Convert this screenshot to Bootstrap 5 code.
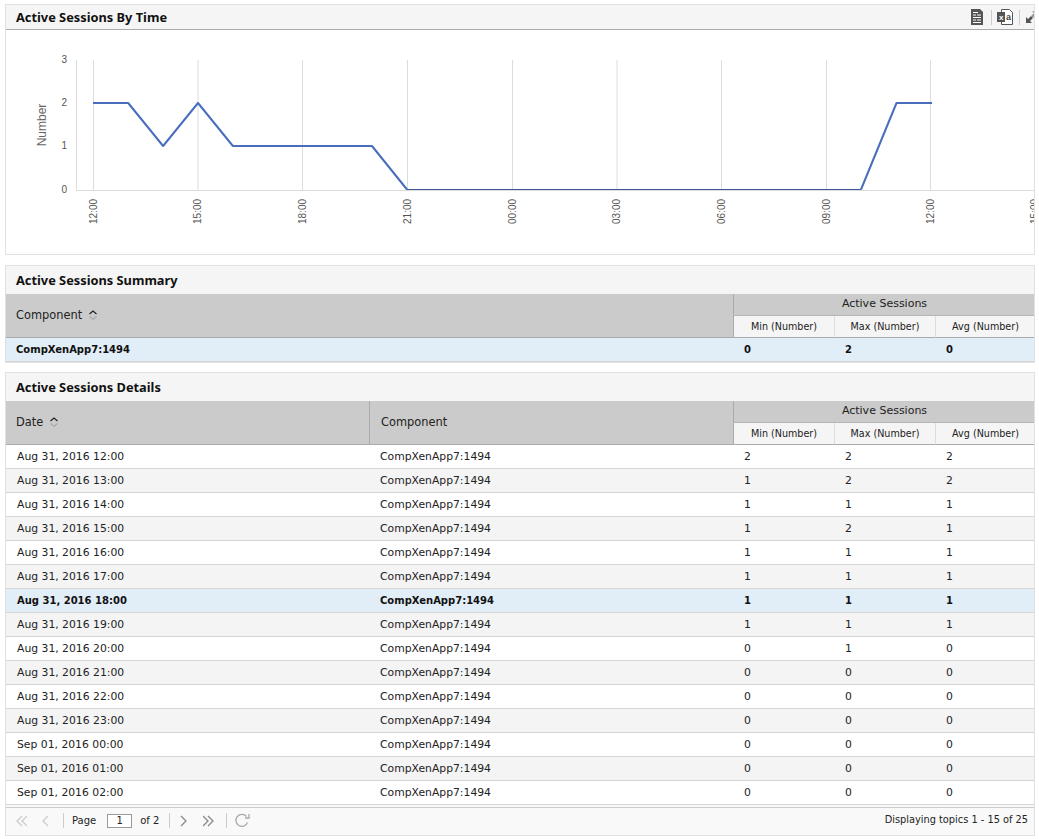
<!DOCTYPE html>
<html lang="en"><head><meta charset="utf-8"><title>Active Sessions</title>
<link href="https://cdn.jsdelivr.net/npm/bootstrap@5.3.0/dist/css/bootstrap.min.css" rel="stylesheet">
<style>
body{background:#fff;font-family:"DejaVu Sans",sans-serif;font-size:11px;color:#111;padding:4px 4px 0 5px;margin:0;overflow:hidden}
.pane{border:1px solid #e1e1e1;margin-bottom:10px;overflow:hidden;background:#fff}
.pane.tight{margin-bottom:9px}
.pane.foot{background:#f9f9f9}
.pane-head{height:24px;background:#f5f5f5;font-family:"Noto Sans","DejaVu Sans",sans-serif;font-weight:700;font-size:12.8px;color:#111;padding:2px 0 0 10px;display:flex;align-items:center;justify-content:space-between;white-space:nowrap}
.pane-head.ruled{border-bottom:1px solid #aaa;height:25px;padding-right:0}
.pane-head.plain{height:28px}
.tools{display:flex;align-items:center;width:71px;flex:none;height:100%;overflow:hidden;margin-top:-2px}
.tools svg{display:block;flex:none}
.tsep{width:1px;height:15px;background:#ccc;flex:none}
.chart{display:block;width:1029px;height:224px}
.chart text{font-family:"Liberation Sans",sans-serif;font-size:10px;fill:#555}
.grid{table-layout:fixed;width:1029px;margin:0;border-collapse:separate;border-spacing:0}
.grid th{background:#cbcbcb;font-weight:400;font-size:11.4px;color:#222;padding:0 0 0 10px;border-bottom:1px solid #aaa;vertical-align:middle;white-space:nowrap}
.grid th.vsep{border-left:1px solid #aaa}
.grid th.wide{padding-left:11px}
.grid th.group{height:22px;text-align:center;padding:0;font-size:11px;border-bottom:1px solid #b5b5b5}
.grid th.sub{height:22px;background:#f5f5f5;font-size:9.6px;text-align:center;padding:2px 0 0;border-left:1px solid #ddd;border-bottom:1px solid #aaa}
.grid th.sub.first{border-left:1px solid #aaa}
.grid td{height:24px;padding:2px 0 0 11px;font-size:10.8px;color:#222;border-bottom:1px solid #d5d5d5;background:#fff;white-space:nowrap;box-shadow:none}
.grid tr.alt td{background:#f4f4f4}
.grid tr.pick td{background:#e1edf7;font-weight:700;font-size:10px;color:#111;padding-top:0}
.sorter{margin-left:6px;vertical-align:-2px}
.pager{height:28px;background:#f9f9f9;border-top:1px solid #ccc;margin-top:2px;display:flex;align-items:center;padding:0 6px 2px 10px;font-size:10px;color:#222;white-space:nowrap}
.pager svg{display:block;flex:none}
.psep{width:1px;height:15px;background:#ccc;flex:none}
.pageno{width:25px;height:14px;border:1px solid #999;background:#fff;text-align:center;line-height:12px;flex:none;margin:0 8px 0 11px}
.tally{font-size:9.8px}
</style></head>
<body>
<section class="pane">
  <div class="pane-head ruled"><span>Active Sessions By Time</span>
    <div class="tools">
      <svg width="12" height="16" viewBox="0 0 12 16" style="margin-left:8px"><path d="M0 0h9l3 3v13H0z" fill="#555"/><path d="M2 3.500h5M2 6h3M6 6h4M2 8.500h8M2 11h3M6 11h4M2 13.500h8" stroke="#fff" stroke-width="1"/></svg>
      <div class="tsep" style="margin-left:8px"></div>
      <svg width="16" height="16" viewBox="0 0 16 16" style="margin-left:5px"><path d="M4.500.5h8l3 3v12h-11z" fill="#fff" stroke="#555"/><rect x="0" y="3" width="8" height="10" fill="#555"/><text x="2" y="11" font-size="8" font-weight="700" fill="#fff" font-family="Liberation Sans,sans-serif">x</text><text x="9" y="11" font-size="9" fill="#444" font-family="Liberation Sans,sans-serif">a</text></svg>
      <div class="tsep" style="margin-left:6px"></div>
      <svg width="12" height="12" viewBox="0 0 12 12" style="margin-left:6px"><path d="M0 12V6l2 2 3-3 2 2-3 3 2 2z" fill="#555"/><path d="M12 0v6l-2-2-3 3-2-2 3-3-2-2z" fill="#999"/></svg>
    </div>
  </div>
  <svg class="chart" viewBox="6 30 1029 224" aria-label="Active Sessions By Time chart">
    <g stroke="#dcdcdc" stroke-width="1" fill="none">
      <path d="M93.500 60V190M198 60V190M302.500 60V190M407.500 60V190M512.500 60V190M617 60V190M721.500 60V190M826.500 60V190M930.500 60V190"/>
      <path d="M76.500 60V190.500H1035"/>
    </g>
    <polyline fill="none" stroke="#4a6ebd" stroke-width="2" stroke-linejoin="round" points="93,103 128.200,103 163.100,146 198,103 232.900,146 372,146 407,189.500"/>
    <path d="M407 189.500H861" fill="none" stroke="#41599a" stroke-width="1"/>
    <polyline fill="none" stroke="#4a6ebd" stroke-width="2" stroke-linejoin="round" points="861,189.500 896.500,103 932,103"/>
    <g text-anchor="end"><text x="67" y="63">3</text><text x="67" y="106">2</text><text x="67" y="149">1</text><text x="67" y="193">0</text></g>
    <text transform="translate(46 125) rotate(-90)" text-anchor="middle" style="font-size:12px;fill:#666">Number</text>
    <g>
      <text transform="translate(97 224) rotate(-90)">12:00</text>
      <text transform="translate(201 224) rotate(-90)">15:00</text>
      <text transform="translate(306 224) rotate(-90)">18:00</text>
      <text transform="translate(411 224) rotate(-90)">21:00</text>
      <text transform="translate(516 224) rotate(-90)">00:00</text>
      <text transform="translate(620 224) rotate(-90)">03:00</text>
      <text transform="translate(725 224) rotate(-90)">06:00</text>
      <text transform="translate(830 224) rotate(-90)">09:00</text>
      <text transform="translate(934 224) rotate(-90)">12:00</text>
      <text transform="translate(1038 224) rotate(-90)">15:00</text>
    </g>
  </svg>
</section>

<section class="pane tight">
  <div class="pane-head plain">Active Sessions Summary</div>
  <table class="grid">
    <colgroup><col style="width:727px"><col style="width:101px"><col style="width:101px"><col></colgroup>
    <thead>
      <tr><th rowspan="2">Component<svg class="sorter" width="10" height="12" viewBox="0 0 10 12"><path d="M1.500 5 5 2l3.500 3" fill="none" stroke="#222" stroke-width="1.200"/><path d="M1.500 7.500 5 10.500l3.500-3" fill="none" stroke="#aaa" stroke-width="1.200"/></svg></th><th colspan="3" class="group vsep">Active Sessions</th></tr>
      <tr><th class="sub first">Min (Number)</th><th class="sub">Max (Number)</th><th class="sub">Avg (Number)</th></tr>
    </thead>
    <tbody><tr class="pick"><td style="padding-left:10px">CompXenApp7:1494</td><td>0</td><td>2</td><td>0</td></tr></tbody>
  </table>
</section>

<section class="pane foot mb-0">
  <div class="pane-head plain">Active Sessions Details</div>
  <table class="grid">
    <colgroup><col style="width:363px"><col style="width:364px"><col style="width:101px"><col style="width:101px"><col></colgroup>
    <thead>
      <tr><th rowspan="2">Date<svg class="sorter" width="10" height="12" viewBox="0 0 10 12"><path d="M1.500 5 5 2l3.500 3" fill="none" stroke="#222" stroke-width="1.200"/><path d="M1.500 7.500 5 10.500l3.500-3" fill="none" stroke="#aaa" stroke-width="1.200"/></svg></th><th rowspan="2" class="vsep wide">Component</th><th colspan="3" class="group vsep">Active Sessions</th></tr>
      <tr><th class="sub first">Min (Number)</th><th class="sub">Max (Number)</th><th class="sub">Avg (Number)</th></tr>
    </thead>
    <tbody>
      <tr><td>Aug 31, 2016 12:00</td><td>CompXenApp7:1494</td><td>2</td><td>2</td><td>2</td></tr>
      <tr class="alt"><td>Aug 31, 2016 13:00</td><td>CompXenApp7:1494</td><td>1</td><td>2</td><td>2</td></tr>
      <tr><td>Aug 31, 2016 14:00</td><td>CompXenApp7:1494</td><td>1</td><td>1</td><td>1</td></tr>
      <tr class="alt"><td>Aug 31, 2016 15:00</td><td>CompXenApp7:1494</td><td>1</td><td>2</td><td>1</td></tr>
      <tr><td>Aug 31, 2016 16:00</td><td>CompXenApp7:1494</td><td>1</td><td>1</td><td>1</td></tr>
      <tr class="alt"><td>Aug 31, 2016 17:00</td><td>CompXenApp7:1494</td><td>1</td><td>1</td><td>1</td></tr>
      <tr class="pick"><td>Aug 31, 2016 18:00</td><td>CompXenApp7:1494</td><td>1</td><td>1</td><td>1</td></tr>
      <tr class="alt"><td>Aug 31, 2016 19:00</td><td>CompXenApp7:1494</td><td>1</td><td>1</td><td>1</td></tr>
      <tr><td>Aug 31, 2016 20:00</td><td>CompXenApp7:1494</td><td>0</td><td>1</td><td>0</td></tr>
      <tr class="alt"><td>Aug 31, 2016 21:00</td><td>CompXenApp7:1494</td><td>0</td><td>0</td><td>0</td></tr>
      <tr><td>Aug 31, 2016 22:00</td><td>CompXenApp7:1494</td><td>0</td><td>0</td><td>0</td></tr>
      <tr class="alt"><td>Aug 31, 2016 23:00</td><td>CompXenApp7:1494</td><td>0</td><td>0</td><td>0</td></tr>
      <tr><td>Sep 01, 2016 00:00</td><td>CompXenApp7:1494</td><td>0</td><td>0</td><td>0</td></tr>
      <tr class="alt"><td>Sep 01, 2016 01:00</td><td>CompXenApp7:1494</td><td>0</td><td>0</td><td>0</td></tr>
      <tr><td>Sep 01, 2016 02:00</td><td>CompXenApp7:1494</td><td>0</td><td>0</td><td>0</td></tr>
    </tbody>
  </table>
  <div class="pager">
    <svg width="11" height="12" viewBox="0 0 11 12" fill="none" stroke="#ccc" stroke-width="1.300"><path d="M6 1 1 6l5 5M11 1 6 6l5 5"/></svg>
    <svg width="8" height="12" viewBox="0 0 8 12" fill="none" stroke="#ccc" stroke-width="1.300" style="margin-left:14px"><path d="M7 1 2 6l5 5"/></svg>
    <div class="psep" style="margin-left:14px"></div>
    <span style="margin-left:8px">Page</span>
    <span class="pageno">1</span><span>of 2</span>
    <div class="psep" style="margin-left:10px"></div>
    <svg width="8" height="12" viewBox="0 0 8 12" fill="none" stroke="#888" stroke-width="1.300" style="margin-left:10px"><path d="M1 1l5 5-5 5"/></svg>
    <svg width="11" height="12" viewBox="0 0 11 12" fill="none" stroke="#888" stroke-width="1.300" style="margin-left:15px"><path d="M0 1l5 5-5 5M5 1l5 5-5 5"/></svg>
    <div class="psep" style="margin-left:12px"></div>
    <svg width="16" height="15" viewBox="0 0 16 15" fill="none" stroke="#aaa" stroke-width="1.300" style="margin-left:7px"><path d="M13.500 9.500A6 6 0 1 1 12.500 3.500"/><path d="M15 1v4h-4" /></svg>
    <span class="ms-auto tally">Displaying topics 1 - 15 of 25</span>
  </div>
</section>
</body></html>
